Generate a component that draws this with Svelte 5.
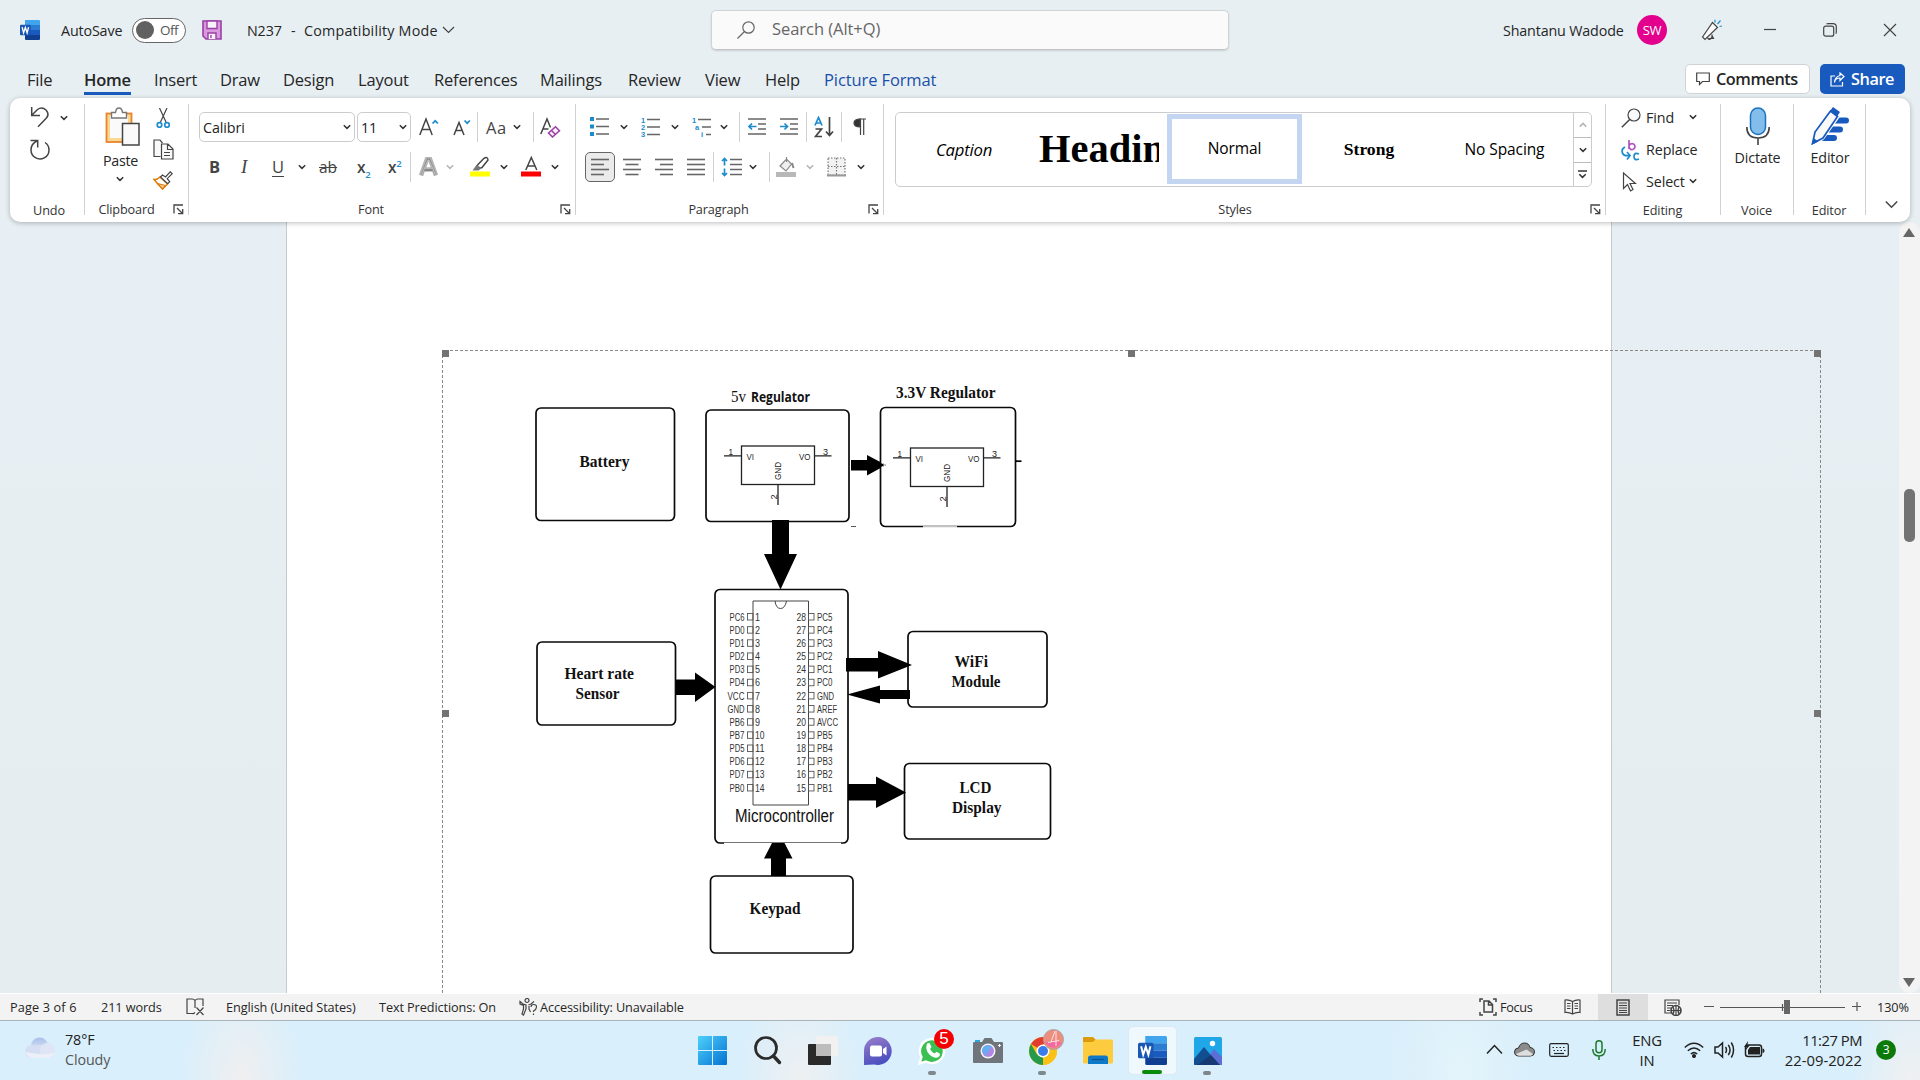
<script>
  const tabs = ['File', 'Home', 'Insert', 'Draw', 'Design', 'Layout', 'References', 'Mailings', 'Review', 'View', 'Help', 'Picture Format'];
  const leftPins = ['PC6', 'PD0', 'PD1', 'PD2', 'PD3', 'PD4', 'VCC', 'GND', 'PB6', 'PB7', 'PD5', 'PD6', 'PD7', 'PB0'];
  const rightPins = ['PC5', 'PC4', 'PC3', 'PC2', 'PC1', 'PC0', 'GND', 'AREF', 'AVCC', 'PB5', 'PB4', 'PB3', 'PB2', 'PB1'];
  const pinWidths = { AREF: 20, AVCC: 21, GND: 17, VCC: 17 };
  const boxes = [
    [536, 408, 138.5, 112.5],
    [706, 410, 143, 111.5],
    [880.5, 407.5, 135, 119],
    [537, 642, 138.5, 83],
    [715, 589.5, 133, 253.500],
    [908, 631.5, 139, 75.5],
    [904.5, 763.5, 146, 75.5],
    [710.5, 876, 142.5, 77]
  ];
  const titles = [
    ['Battery', 579.5, 466.5, 50],
    ['3.3V Regulator', 896, 397.5, 99.5],
    ['Heart rate', 564.5, 678.5, 69.5],
    ['Sensor', 575.5, 698.5, 44],
    ['WiFi', 954.5, 666.5, 33.5],
    ['Module', 951.5, 686.5, 49],
    ['LCD', 959.5, 792.5, 32],
    ['Display', 952, 812.5, 49.5],
    ['Keypad', 749.5, 914, 51]
  ];
</script>

{#snippet chev(faded = false)}
  <svg class="chev" class:faded width="8" height="6" viewBox="0 0 8 6"><path d="M.8 1.2 4 4.400 7.200 1.200" /></svg>
{/snippet}

{#snippet launcher()}
  <svg class="launcher" width="11" height="11" viewBox="0 0 11 11"><path d="M1 9.500V1h9M4 4l5.500 5.500M9.700 5v4.700H5" /></svg>
{/snippet}

{#snippet lines(widths, align)}
  <svg width="20" height="20" viewBox="0 0 20 20" class="ic">
    {#each widths as w, i}
      {@const x = align === 'c' ? (18 - w) / 2 : align === 'r' ? 18 - w : 0}
      <path class="bar" d="M{x} {2.5 + i * 5}h{w}" />
    {/each}
  </svg>
{/snippet}

{#snippet wordLogo(size)}
  <svg width={size} height={size} viewBox="0 0 28 28">
    <path fill="#41a5ee" d="M7 0h19.500q1.500 0 1.500 1.500V7H7z" />
    <path fill="#2b7cd3" d="M7 7h21v7H7z" />
    <path fill="#185abd" d="M7 14h21v7H7z" />
    <path fill="#103f91" d="M7 21h21v5.500q0 1.500-1.500 1.500H8.500Q7 28 7 26.500z" />
    <rect x="0" y="6.500" width="15" height="15" rx="1.500" fill="#1a56b4" />
    <path d="M3 10l2 8L7.500 10.500 10 18l2-8" fill="none" stroke="#fff" stroke-width="1.900" />
  </svg>
{/snippet}

{#snippet regulator(dx, dy)}
  <g transform="translate({dx} {dy})" class="reg">
    <rect x="741.500" y="446" width="73" height="38.500" />
    <path d="M724 455.800h17.500M814.500 455.800h17M778 484.500V505" />
    <text x="728.500" y="454.500" textLength="4.500" lengthAdjust="spacingAndGlyphs">1</text>
    <text x="823" y="454.500" textLength="5" lengthAdjust="spacingAndGlyphs">3</text>
    <text x="746.500" y="459.500" textLength="7.500" lengthAdjust="spacingAndGlyphs">VI</text>
    <text x="799" y="459.500" textLength="11.500" lengthAdjust="spacingAndGlyphs">VO</text>
    <text transform="translate(781 480) rotate(-90)" textLength="18" lengthAdjust="spacingAndGlyphs">GND</text>
    <text transform="translate(776.500 499.500) rotate(-90)" textLength="5">2</text>
  </g>
{/snippet}

<div class="window">
  <header class="titlebar">
    <div class="title-left">
      {@render wordLogo(20)}
      <span class="autosave">AutoSave</span>
      <span class="toggle"><i></i><b>Off</b></span>
      <svg class="save" width="20" height="20" viewBox="0 0 20 20">
        <path d="M1 1h18v18H4l-3-3z" fill="#d99add" stroke="#9b3fa5" stroke-width="1.600" />
        <path d="M5 1h10v7.500H5zM6 19v-6h8v6" fill="#f8f3fa" stroke="#9b3fa5" stroke-width="1.400" />
        <path d="M9 15v3" stroke="#9b3fa5" stroke-width="1.400" />
      </svg>
      <span class="doc">N237</span><span class="dash">-</span><span class="mode">Compatibility Mode</span>
      <svg width="13" height="8" viewBox="0 0 13 8" class="ic"><path d="M1 1l5.500 5.500L12 1" /></svg>
    </div>
    <div class="search">
      <svg width="20" height="20" viewBox="0 0 20 20" class="ic"><circle cx="12.500" cy="7.500" r="5.700" /><path d="M8.500 11.500 1.500 18.500" /></svg>
      <span>Search (Alt+Q)</span>
    </div>
    <div class="title-right">
      <span class="user">Shantanu Wadode</span>
      <span class="avatar">SW</span>
      <svg width="22" height="22" viewBox="0 0 22 22" class="ic">
        <path fill="#fafafa" d="M1.500 18 11.500 3.500l5 5L4 20.500z" /><path d="M6.500 18.500q1 2.500 3 1.500t1.500-4.500M11 16.500l1.500 3H8" /><path class="blue" d="M14 3.500V.8M16.500 5l3-3.500M18.500 7.500l2.500-.5" />
      </svg>
      <svg width="12" height="12" viewBox="0 0 12 12" class="ic"><path d="M0 5.500h12" /></svg>
      <svg width="14" height="14" viewBox="0 0 14 14" class="ic"><rect x=".7" y="3.200" width="10" height="10" rx="2" /><path d="M3.500 1Q4 .7 5 .7h5q3.300 0 3.300 3.300v5q0 1-.6 1.600" /></svg>
      <svg width="14" height="14" viewBox="0 0 14 14" class="ic"><path d="M1 1l12 12M13 1 1 13" /></svg>
    </div>
  </header>

  <nav class="tabrow">
    <div class="tabs">
      {#each tabs as t}
        <span class="tab" class:active={t === 'Home'} class:context={t === 'Picture Format'}>{t}</span>
      {/each}
    </div>
    <div class="actions">
      <span class="btn comments"><svg width="14" height="14" viewBox="0 0 14 14" class="ic"><path d="M.7 1h12.600v8.500H6.500L3.500 12.500V9.500H.7z" /></svg>Comments</span>
      <span class="btn share"><svg width="15" height="15" viewBox="0 0 15 15"><path d="M5 4H1v10h11.500V10M4.500 10.500Q5 6 10 6V8.500l4-4L10 1v2.500Q5 4.500 4.500 10.500z" fill="none" stroke="#fff" stroke-width="1.200" /></svg>Share</span>
    </div>
  </nav>

  <section class="ribbon">
    <div class="group g-undo">
      <div class="body">
        <svg width="20" height="21" viewBox="0 0 20 21" class="ic thick"><path d="M1.700 0v8.500H10M2 8 7.500 2.500Q12 -.6 16 3q4 4.500 0 8.500L8 19.800" /></svg>
        {@render chev()}
        <svg width="20" height="21" viewBox="0 0 20 21" class="ic thick"><path d="M.5 1.500h7.200v7M7.500 1.800Q1 4.500 1 11a9 9 0 1 0 14-7.500" /></svg>
      </div>
      <footer><span>Undo</span></footer>
    </div>

    <div class="group g-clip">
      <div class="body">
        <div class="paste">
          <svg width="36" height="39" viewBox="0 0 36 39">
            <rect x="1.500" y="6.500" width="25" height="28.500" fill="#fbd892" stroke="#e8842d" stroke-width="1.800" />
            <rect x="5" y="9" width="18" height="22" fill="#fafafa" />
            <path d="M6.500 11V5.500h4Q11 1 14 1t3.500 4.500h4V11z" fill="#fff" stroke="#777" stroke-width="1.400" />
            <rect x="17.500" y="16.500" width="16.500" height="21.500" fill="#fafafa" stroke="#444" stroke-width="1.500" />
          </svg>
          <span>Paste</span>
          {@render chev()}
        </div>
        <div class="clip-tools">
          <svg width="20" height="20" viewBox="0 0 20 20" class="ic"><path d="M6.500 0 13 14M14 0 7.500 14" /><circle class="blue fat" cx="6.500" cy="17" r="2.300" /><circle class="blue fat" cx="14" cy="17" r="2.300" /></svg>
          <svg width="21" height="21" viewBox="0 0 21 21" class="ic"><path fill="#fafafa" d="M7.500 17.500H1V1h6l2.500 3" /><path fill="#fafafa" d="M8.500 5H15l5 5v10H8.500zM14.500 5.500V10.500h5M11 13.500h6M11 16.500h6" /></svg>
          <svg width="20" height="20" viewBox="0 0 20 20" class="ic"><path d="M1 8.500 9.500 18l5-5L7 6Q4 9 1 8.500z" fill="#fff" stroke="#e07b10" stroke-width="1.500" /><path fill="#f7cf86" stroke="#e07b10" d="M4.500 12.500l8 2-3 3.500z" /><path fill="#fff" d="M7.500 6l2-2 3 2L17.300.8l1.900 1.900-5 5 2.500 3-2 2z" /></svg>
        </div>
      </div>
      <footer><span>Clipboard</span>{@render launcher()}</footer>
    </div>

    <div class="group g-font">
      <div class="row r1">
        <div class="combo">Calibri{@render chev()}</div>
        <div class="combo">11{@render chev()}</div>
        <svg width="22" height="22" viewBox="0 0 22 22" class="ic thick"><path d="M.8 19 7 3 13.200 19M3 13.500h8" /><path class="blue fat" d="M13.500 7.500l2.700-2.700 2.700 2.700" /></svg>
        <svg width="20" height="22" viewBox="0 0 20 22" class="ic thick"><path d="M1 19 6 6.500 11 19M3 14.500h6" /><path class="blue fat" d="M11.500 4.500l2.700 2.700 2.700-2.700" /></svg>
        <i class="sep"></i>
        <span class="aa">Aa</span>
        {@render chev()}
        <i class="sep"></i>
        <svg width="21" height="22" viewBox="0 0 21 22" class="ic thick"><path d="M.8 18 7 3l3.500 8.500M3 13h5.500" /><path stroke="#9b3fa5" fill="#f9effa" d="M8.500 17l7-6.200 4 4-7 6.200zM11.500 14.500l4 4" /></svg>
      </div>
      <div class="row r2">
        <b class="gl">B</b>
        <em class="gl it">I</em>
        <span class="gl un">U</span>
        {@render chev()}
        <s class="gl">ab</s>
        <b class="gl xx">x<sub>2</sub></b>
        <b class="gl xx">x<sup>2</sup></b>
        <i class="sep"></i>
        <svg width="20" height="20" viewBox="0 0 20 20"><path d="M2 18.500 8 2h3l6 16.500M5 12.500h9" fill="none" stroke="#b5b5b5" stroke-width="4.500" /><path d="M2.500 18 8.700 2.500h1.600L16.500 18M5.500 13h8" fill="none" stroke="#888" stroke-width="1.800" /><path d="M2.500 18 9 3h1l6.500 15" fill="none" stroke="#e0e0e0" stroke-width=".7" /></svg>
        {@render chev(true)}
        <svg width="21" height="22" viewBox="0 0 21 22" class="ic thick"><path d="M8 8.500 14 2.300Q17.500 0 18 4l-6 7.500-4.500 1.200L6.500 10.500z" /><path fill="#777" stroke="none" d="M6.500 9 2.500 14.500h6L12 12z" /><path stroke="#ff0" stroke-width="5" d="M0 18h20" /></svg>
        {@render chev()}
        <svg width="21" height="22" viewBox="0 0 21 22" class="ic thick"><path d="M4.800 14 10.300 1.500 15.800 14M6.800 10h7" /><path stroke="red" stroke-width="5" d="M0 18h20" /></svg>
        {@render chev()}
      </div>
      <footer><span>Font</span>{@render launcher()}</footer>
    </div>

    <div class="group g-para">
      <div class="row r1">
        <svg width="20" height="20" viewBox="0 0 20 20" class="ic"><path class="bar" d="M6 2h13M6 9.500h13M6 17h13" /><path fill="#1e8bcd" stroke="none" d="M0 0h4v4H0zM0 7.500h4v4H0zM0 15h4v4H0z" /></svg>
        {@render chev()}
        <svg width="20" height="20" viewBox="0 0 20 20" class="ic num"><path class="bar" d="M6 2.500h13M6 10h13M6 17.500h13" /><text x="0" y="5.500">1</text><text x="0" y="12.700">2</text><text x="0" y="20">3</text></svg>
        {@render chev()}
        <svg width="20" height="20" viewBox="0 0 20 20" class="ic num"><path class="bar" d="M6 2.500h13M10 10h9M14 17.500h5" /><text x="0" y="5.500">1</text><text x="3" y="12.700">a</text><text x="9" y="20">i</text></svg>
        {@render chev()}
        <i class="sep"></i>
        <svg width="19" height="20" viewBox="0 0 19 20" class="ic"><path class="bar" d="M0 2h18M10 7h8M10 12h8M0 17h18" /><path class="blue fat" d="M8.500 9.500H1.500M4 6.500l-3 3 3 3" /></svg>
        <svg width="19" height="20" viewBox="0 0 19 20" class="ic"><path class="bar" d="M0 2h18M10 7h8M10 12h8M0 17h18" /><path class="blue fat" d="M0 9.500h7M4.500 6.500l3 3-3 3" /></svg>
        <i class="sep"></i>
        <svg width="21" height="22" viewBox="0 0 21 22" class="ic"><path class="blue fat" d="M1 9.500 4.500 1.500 8 9.500M2.500 7h4" /><path class="fat" d="M1.500 13h6l-6 7.500h6.500M15.500 1v18M12 15.500l3.500 4 3.500-4" /></svg>
        <i class="sep"></i>
        <svg width="14" height="18" viewBox="0 0 14 18" class="ic"><path d="M6 1h7M7.500 1v16M10.700 1v16" /><path fill="#333" d="M7 9Q1 9 1 5t6-4z" /></svg>
      </div>
      <div class="row r2">
        <span class="sel">{@render lines([18, 13, 18, 13], 'l')}</span>
        {@render lines([18, 13, 18, 13], 'c')}
        {@render lines([18, 13, 18, 13], 'r')}
        {@render lines([18, 18, 18, 18], 'l')}
        <i class="sep"></i>
        <svg width="21" height="20" viewBox="0 0 21 20" class="ic"><path class="bar" d="M9 2.500h12M9 7.500h12M9 12.500h12M9 17.500h12" /><path class="blue fat" d="M3.500 1.500v7M1 4l2.500-2.500L6 4M3.500 11.500v7M1 16l2.500 2.500L6 16" /></svg>
        {@render chev()}
        <i class="sep"></i>
        <svg width="21" height="20" viewBox="0 0 21 20" class="ic"><path stroke="#888" fill="#eee" d="M4 9l6.500-7 5 5-5.500 7zM10.500 0v5" /><path stroke="#888" stroke-width="2" d="M16 6l1.500 5" /><path stroke="#b8b8b8" stroke-width="5" d="M0 17.500h20" /></svg>
        {@render chev(true)}
        <svg width="20" height="20" viewBox="0 0 20 20" class="ic"><path fill="#f2f2f2" stroke="#777" stroke-dasharray="1.500 1.500" d="M1 1h17v17H1zM9.500 1v17M1 9.500h17" /><path stroke="#999" stroke-width="2" d="M0 18.500h19" /></svg>
        {@render chev()}
      </div>
      <footer><span>Paragraph</span>{@render launcher()}</footer>
    </div>

    <div class="group g-styles">
      <div class="gallery">
        <span class="style caption">Caption</span>
        <span class="style heading"><span>Headin</span></span>
        <span class="style normal">Normal</span>
        <span class="style strong">Strong</span>
        <span class="style">No Spacing</span>
        <div class="scroller">
          <span><svg class="chev faded" width="8" height="6" viewBox="0 0 8 6"><path d="M.8 4.600 4 1.400 7.200 4.600" /></svg></span>
          <span>{@render chev()}</span>
          <span><svg class="chev" width="9" height="9" viewBox="0 0 9 9"><path d="M0 1h9M1.300 4.200 4.500 7.400 7.700 4.200" /></svg></span>
        </div>
      </div>
      <footer><span>Styles</span>{@render launcher()}</footer>
    </div>

    <div class="group g-edit">
      <div class="edit">
        <svg width="20" height="20" viewBox="0 0 20 20" class="ic"><circle cx="13" cy="7" r="6" fill="#fafafa" /><path d="M8.700 11.500.800 19.200" stroke-width="1.500" /></svg>
        <span>Find</span>{@render chev()}
        <svg width="20" height="21" viewBox="0 0 20 21" class="ic"><path stroke="#b353bd" stroke-width="1.700" d="M8 0v9M8 6.500a3 3 0 1 1 0 .1" /><path class="blue fat" d="M18 14q-5-2-5 2.500t5 2.500M4 7q-4 2-2.500 6 1 3.500 7 2.500M6 12l3 3.500-3 4" /></svg>
        <span>Replace</span><span></span>
        <svg width="16" height="20" viewBox="0 0 16 20" class="ic"><path fill="#fff" d="M2.500 1v15.500l4-4 3 6.500 2.500-1.500-3-6h5.500z" /></svg>
        <span>Select</span>{@render chev()}
      </div>
      <footer><span>Editing</span></footer>
    </div>

    <div class="group g-voice">
      <div class="big">
        <svg width="26" height="39" viewBox="0 0 26 39"><rect x="5.500" y="1" width="15" height="26.500" rx="7.500" fill="#83bdec" stroke="#1b73be" stroke-width="1.500" /><path d="M1.800 20q0 11 11.200 11t11.200-11M13 31v7" fill="none" stroke="#444" stroke-width="1.600" /></svg>
        <span>Dictate</span>
      </div>
      <footer><span>Voice</span></footer>
    </div>

    <div class="group g-editor">
      <div class="big">
        <svg width="40" height="39" viewBox="0 0 40 39"><g stroke="#185abd" stroke-width="6" stroke-linecap="round"><path d="M22 13.500h14M18 22.500h12M14 31h10" /></g><path d="M2 37.500 5 25 23 1.500l7 5.500L13 31z" fill="#fff" stroke="#fff" stroke-width="3" /><path d="M2.500 36.500 5 25 20.500 4l7 5.500L13 31z" fill="#fafafa" stroke="#185abd" stroke-width="1.700" /><path fill="#185abd" d="M20 4l3-4 7 5-3 4.500zM1.500 38 3.500 31l5 3.500z" /></svg>
        <span>Editor</span>
      </div>
      <footer><span>Editor</span></footer>
    </div>

    <div class="collapse"><svg width="13" height="9" viewBox="0 0 13 9" class="ic thick"><path d="M.8 1.500 6.500 7.200 12.200 1.500" /></svg></div>
  </section>

  <main class="canvas">
    <div class="page"></div>
    <svg class="drawing" width="1920" height="771" viewBox="0 222 1920 771">
      <path class="marquee" d="M442.500 993V350.500H1820.500V993" />
      <g fill="#737373">
        <rect x="442" y="350" width="7" height="7" /><rect x="1128" y="350" width="7" height="7" /><rect x="1814" y="350" width="7" height="7" />
        <rect x="442" y="710" width="7" height="7" /><rect x="1814" y="710" width="7" height="7" />
      </g>
      {#each boxes as [x, y, w, h]}
        <rect class="box" {x} {y} width={w} height={h} rx="5" />
      {/each}
      {#each titles as [t, x, y, w]}
        <text class="cap" {x} {y} textLength={w} lengthAdjust="spacingAndGlyphs">{t}</text>
      {/each}
      <text class="cap light" x="731" y="402" textLength="15" lengthAdjust="spacingAndGlyphs">5v</text>
      <text class="cap sans" x="751" y="401.500" textLength="59" lengthAdjust="spacingAndGlyphs">Regulator</text>
      {@render regulator(0, 0)}
      {@render regulator(169, 2)}
      <path stroke="#fff" stroke-width="1.500" d="M923 526.900h34M724 843.600h117" />
      <path stroke="#555" stroke-width="1" d="M851 526.500h5" />
      <path stroke="#000" stroke-width="1.700" d="M1016 461.200h5.500" />
      <g fill="#000">
        <path d="M851 460h16v-5L886 465l-19 10.500V470.500H851z" />
        <path d="M772 520h17v34h8l-16.500 35.500L764 554h8z" />
        <path d="M676 679.500h19v-7L715.500 687l-20.500 15v-7H676z" />
        <path d="M846 658h32v-7L912 665l-34 13.500V671.500H846z" />
        <path d="M910 690H880v-4.500L847 694.500 880 703.500V699h30z" />
        <path d="M848 784h28v-7.500L906 792.500 876 808V800.500H848z" />
        <path d="M771 876V858.500h-7l8-15.500h12.500l8 15.500H786V876z" />
      </g>
      <path d="M881 462.500l4 2.500-4 2.500" fill="none" stroke="#fff" stroke-width=".8" />
      <path d="M753 601h55.500v204H753zM775 601q1 7.500 5.500 7.500T786.500 601" fill="none" stroke="#444" stroke-width="1" />
      <g class="pins">
        {#each leftPins as p, i}
          {@const y = 617 + i * 13.15}
          {@const w = pinWidths[p] ?? 15}
          <text x={744.5 - w} y={y + 3.6} textLength={w} lengthAdjust="spacingAndGlyphs">{p}</text>
          <rect x="747.500" y={y - 3.5} width="5.500" height="6.500" />
          <text x="755" y={y + 3.6} textLength={i < 9 ? 5 : 9.5} lengthAdjust="spacingAndGlyphs">{i + 1}</text>
          <text x="796.500" y={y + 3.6} textLength="9.500" lengthAdjust="spacingAndGlyphs">{28 - i}</text>
          <rect x="808.500" y={y - 3.5} width="5.500" height="6.500" />
          <text x="817" y={y + 3.6} textLength={pinWidths[rightPins[i]] ?? 15.5} lengthAdjust="spacingAndGlyphs">{rightPins[i]}</text>
        {/each}
      </g>
      <text class="mcu" x="735" y="822" textLength="99" lengthAdjust="spacingAndGlyphs">Microcontroller</text>
    </svg>
    <div class="scrollbar">
      <svg width="12" height="9" viewBox="0 0 12 9"><path fill="#666" d="M6 0 12 9H0z" /></svg>
      <i></i>
      <svg width="12" height="9" viewBox="0 0 12 9"><path fill="#666" d="M0 0h12L6 9z" /></svg>
    </div>
  </main>

  <div class="status">
    <div class="st-left">
      <span>Page 3 of 6</span><span>211 words</span>
      <svg width="19" height="18" viewBox="0 0 19 18" class="ic"><path d="M9 14.500Q7.500 16 6 15.500H1V1h5q2 0 3 1.500Q10 1 12 1h5v7M9 2.500V10M10.500 9.500l7 7.500M17.500 9.500 10.500 17" /></svg>
      <span>English (United States)</span><span>Text Predictions: On</span>
      <svg width="19" height="18" viewBox="0 0 19 18" class="ic"><circle cx="8" cy="2.500" r="2" /><path d="M1 3.500 4 6 7 7v4L4.500 17 3 16l1.500-5L4.500 7.500 1 6zM9.500 7 12 6l3-2.500M10 8v3l1.500 3M12 9q0-2.500 2.800-2.500T17.500 9t-3 4v1M14.500 15.500v1.500" /></svg>
      <span class="acc">Accessibility: Unavailable</span>
    </div>
    <div class="st-right">
      <svg width="18" height="18" viewBox="0 0 18 18" class="ic"><path d="M4 1H1v3M14 1h3v3M4 17H1v-3M14 17h3v-3" stroke-width="1.500" /><path stroke-width="1.500" d="M5 3h5l3.500 3.500V14H5zM9.500 3v4H13" /></svg>
      <span class="focus">Focus</span>
      <svg width="17" height="16" viewBox="0 0 17 16" class="ic"><path d="M8.500 2.500Q5 .5 1 1v12.500q4-.5 7.500 1.500 3.500-2 7.500-1.500V1Q12 .5 8.500 2.500V15M3 4.500h3.500M3 7h3.500M3 9.500h3.500M10.500 4.500H14M10.500 7H14M10.500 9.500H14" /></svg>
      <span class="print"><svg width="14" height="17" viewBox="0 0 14 17" class="ic"><path stroke-width="1.500" d="M1 1h12v15H1z" /><path d="M3 4h8M3 6.500h8M3 9h8M3 11.500h8M3 13.500h8" /></svg></span>
      <svg width="18" height="17" viewBox="0 0 18 17" class="ic"><path d="M7 14H1V1h14v5M3 4h10M3 6.500h6M3 9h4M3 11.500h3" /><circle cx="12" cy="11.500" r="5" fill="#f3f3f3" stroke-width="1.600" /><path d="M7 11.500h10M12 6.500v10M9 8q2 3.500 0 7M15 8q-2 3.500 0 7" /></svg>
      <svg width="157" height="16" viewBox="0 0 157 16" class="ic slider"><path d="M0 7.500h10M16 8.500h125M78.500 5v7M148 7.500h10M153 3v9" /><rect x="80" y="1" width="6" height="14" fill="#666" stroke="none" /></svg>
      <span class="pct">130%</span>
    </div>
  </div>

  <div class="taskbar">
    <div class="weather">
      <svg width="31" height="22" viewBox="0 0 31 22">
        <defs><linearGradient id="cl" x2="0" y2="1"><stop offset="0" stop-color="#a9c0ea" /><stop offset="1" stop-color="#e9edf8" /></linearGradient></defs>
        <circle cx="14.500" cy="9" r="8.500" fill="url(#cl)" /><rect x="0" y="8" width="30" height="13" rx="6.500" fill="#d5def2" /><circle cx="22.500" cy="13.500" r="7.500" fill="#dfe5f5" /><path d="M0 15q3 6 8 6h15q6-1 7-6-5 3-15 2T0 15z" fill="#eceff8" />
      </svg>
      <div><span>78°F</span><span class="dim">Cloudy</span></div>
    </div>
    <div class="apps">
      <span class="app">
        <svg width="29" height="29" viewBox="0 0 29 29"><defs><linearGradient id="w" x2="1" y2="1"><stop offset="0" stop-color="#4fd0fb" /><stop offset="1" stop-color="#0372d1" /></linearGradient></defs><path fill="url(#w)" d="M1 0h13v14H0V1q0-1 1-1zM15 0h13q1 0 1 1v13H15zM0 15h14v14H1q-1 0-1-1zM15 15h14v13q0 1-1 1H15z" /></svg>
      </span>
      <span class="app">
        <svg width="29" height="29" viewBox="0 0 29 29" fill="none" stroke="#2b2b2b"><circle cx="13" cy="12" r="10.500" fill="#dfeef6" stroke-width="2.700" /><path stroke-width="3.400" stroke-linecap="round" d="M20.500 20l6 6.500" /></svg>
      </span>
      <span class="app">
        <svg width="30" height="29" viewBox="0 0 30 29"><rect y="8" width="23" height="21" rx="1" fill="#2a2a2a" /><rect x="8" width="22" height="20" rx="1" fill="#f1f1f1" /><path fill="#bcbcbc" d="M8 8h15v12H8z" /></svg>
      </span>
      <span class="app">
        <svg width="30" height="30" viewBox="0 0 30 30"><defs><linearGradient id="t" x2=".4" y2="1"><stop offset="0" stop-color="#9d7fc9" /><stop offset="1" stop-color="#4c50c0" /></linearGradient></defs><path fill="url(#t)" d="M15 1a14 14 0 1 1-4 27.500L1 29V15A14 14 0 0 1 15 1z" /><rect x="7" y="9.500" width="12" height="11" rx="2" fill="#fff" /><path fill="#fff" d="M20 13l3.500-2.500v9L20 17z" /></svg>
      </span>
      <span class="app">
        <svg width="29" height="29" viewBox="0 0 29 29"><path d="M1.500 27.500 3.500 21A12 12 0 1 1 8 25.500z" fill="#3cc053" stroke="#fff" stroke-width="2.400" /><path fill="#fff" d="M9 7.500l2.500-.5 2 4-1.500 2q1.500 3 4.500 4.500l2-1.800 3.500 2q0 3.500-3.500 4Q15 22 11 18T9 7.500z" /></svg>
        <b class="badge">5</b><i class="run"></i>
      </span>
      <span class="app">
        <svg width="30" height="25" viewBox="0 0 30 25"><path fill="#2ca5dc" d="M2 2h5v4H2z" /><path fill="#70757b" d="M1 4h8l2.500-4h7L21 4h8q1 0 1 1v19q0 1-1 1H1q-1 0-1-1V5q0-1 1-1z" /><circle cx="15" cy="13" r="7.500" fill="#f4f4f8" /><circle cx="15" cy="13" r="6" fill="#b186e6" /><path fill="#67aef0" d="M9 13a6 6 0 0 1 10-4.500L12 18z" /><path stroke="#fff" stroke-width=".9" d="M26.500 6v3M25 7.500h3" /></svg>
      </span>
      <span class="app">
        <svg width="28" height="28" viewBox="0 0 28 28"><circle cx="14" cy="14" r="14" fill="#fbc116" /><path fill="#e33b2e" d="M14 14 1.900 7A14 14 0 0 1 26.100 7H14z" /><path fill="#269a4b" d="M1.900 7 8 17.500 14 20.500 14 28A14 14 0 0 1 1.900 7z" /><path fill="#fbc116" d="M20 17.500 14 28A14 14 0 0 0 26.100 7H14z" /><circle cx="14" cy="14" r="6.500" fill="#fff" /><circle cx="14" cy="14" r="5" fill="#3a7cec" /></svg>
        <svg class="profile" width="21" height="21" viewBox="0 0 21 21"><circle cx="10.500" cy="10.500" r="10" fill="#ed8d7e" stroke="#a9a49f" /><path fill="#f26aa0" d="M2 14q8-5 17 0-8 9-17 0z" /><path stroke="#fde2e4" stroke-width="1" fill="none" d="M12 2 8 13M13 2v15M5 13.500l11-2" /></svg>
        <i class="run"></i>
      </span>
      <span class="app">
        <svg width="30" height="27" viewBox="0 0 30 27"><path fill="#dc9b0b" d="M1 0h9l3 3v6H0V1q0-1 1-1z" /><path fill="#fdcb3e" d="M0 5h10l2.500-2.500H29q1 0 1 1V25q0 1.500-1 1.500H1Q0 26.500 0 25z" /><path fill="#0f79c9" d="M5 27v-6q0-2.500 2.500-2.500h15q2.500 0 2.500 2.500v6z" /><path stroke="#07528f" stroke-width="1.200" d="M9 22.500h12" /></svg>
      </span>
      <span class="app on">{@render wordLogo(29)}<i class="run active-run"></i></span>
      <span class="app">
        <svg width="28" height="28" viewBox="0 0 28 28"><rect width="28" height="28" rx="1.500" fill="#20a7e8" /><path fill="#5d6fd5" d="M10 25 20 12l8 8v8H10z" /><path fill="#124f91" d="M0 22 10 10l15 18H1q-1 0-1-1z" /><path fill="#173a74" d="M3 28 17 18l9 10z" /><circle cx="18.500" cy="6.500" r="2.700" fill="#fff" /></svg>
        <i class="run"></i>
      </span>
    </div>
    <div class="tray">
      <svg width="17" height="11" viewBox="0 0 17 11" class="ic thick"><path d="M1 9.500 8.500 1.500 16 9.500" /></svg>
      <svg width="21" height="15" viewBox="0 0 21 15"><path d="M5 14q-4.500 0-4.500-4T4.500 6q1.500-5 6-5T16 5.500q4.500.5 4.500 4.500t-4 4z" fill="#8b8b8b" stroke="#333" /><path d="M2 12 12.500 7.500 19 12q-1 2-3 1.700H5Q3 13.700 2 12z" fill="#dedede" /></svg>
      <svg width="20" height="14" viewBox="0 0 20 14" class="ic"><rect x=".7" y=".7" width="18.600" height="12.600" rx="1.500" /><path stroke-dasharray="1.500 2" d="M3.500 4.500h13M4.500 7.500h12" /><path d="M5 10.500h10" /></svg>
      <svg width="14" height="20" viewBox="0 0 14 20" fill="none" stroke="#1d7a2d" stroke-width="1.500"><rect x="4" y=".8" width="6" height="12" rx="3" /><path d="M.8 9q0 7 6.200 7t6.200-7M7 16v4" /></svg>
      <div class="lang"><span>ENG</span><span>IN</span></div>
      <svg width="20" height="16" viewBox="0 0 20 16" class="ic thick"><path d="M.8 5.500q9.200-8.500 18.400 0M3.800 8.800q6.200-5.500 12.400 0M6.800 12q3.200-2.700 6.400 0" /><circle cx="10" cy="14" r="1.300" fill="#222" /></svg>
      <svg width="21" height="18" viewBox="0 0 21 18" class="ic thick"><path d="M1 6h3l4.500-4v14L4 12H1zM11.500 6q2 3 0 6M14.300 3.800q3.500 5.200 0 10.400M17.300 1.500q4.500 7.500 0 15" /></svg>
      <svg width="21" height="17" viewBox="0 0 21 17" class="ic thick"><rect x="1.500" y="4" width="16" height="11.500" rx="2.500" /><path fill="#222" stroke="none" d="M6 6h10v7.500H4V9zM18.500 7.500q2 0 2 2.200t-2 2.200zM4 0 0 6h2.500L1 10 6 4H3.500z" /></svg>
      <div class="clock"><span class="time">11:27 PM</span><span>22-09-2022</span></div>
      <b class="count">3</b>
    </div>
  </div>
</div>

<style>
  :global(body) { margin: 0; overflow: hidden; }
  .window { width: 1920px; height: 1080px; display: flex; flex-direction: column; background: #e7eff3; color: #262626; font: 14.3px 'Open Sans', 'Noto Sans', sans-serif; white-space: nowrap; }
  .window :global(svg) { display: block; flex: none; }
  .ic { fill: none; stroke: #444; stroke-width: 1.2; }
  .thick { stroke-width: 1.5; }
  .fat { stroke-width: 1.7; }
  .blue { stroke: #1e8bcd; }
  .bar { stroke: #666; stroke-width: 1.6; }
  .chev { fill: none; stroke: #333; stroke-width: 1.5; }
  .faded { stroke: #b5b5b5; }
  .launcher { fill: none; stroke: #444; stroke-width: 1.3; }

  .titlebar { height: 60px; display: grid; grid-template-columns: 711px 518px 1fr; }
  .title-left { display: grid; grid-template-columns: 41px 71px 70px 45px 44px 13px 138px 14px; align-items: center; padding-left: 20px; }
  .autosave, .doc, .user { letter-spacing: -0.15px; }
  .mode { letter-spacing: 0.2px; }
  .toggle { box-sizing: border-box; width: 54px; height: 25px; border: 1px solid #666; border-radius: 13px; background: #fff; display: flex; align-items: center; gap: 6px; padding-left: 3px; }
  .toggle i { width: 18px; height: 18px; border-radius: 50%; background: #616161; }
  .toggle b { font-weight: 400; font-size: 13.5px; letter-spacing: -0.5px; color: #555; }
  .search { box-sizing: border-box; height: 40px; margin-top: 10px; background: #fafafa; border: 1px solid #d1d4d6; border-bottom-color: #c2c4c6; border-radius: 5px; box-shadow: 0 1px 2px #0002; display: flex; align-items: center; gap: 16px; padding-left: 24px; font-size: 16.5px; letter-spacing: -0.05px; color: #666; }
  .search .ic { stroke: #666; }
  .search span { line-height: 34px; padding-bottom: 2px; }
  .title-right { display: grid; grid-template-columns: 134px 64px 63px 59px 60px 14px; align-items: center; padding-left: 274px; }
  .avatar { width: 30px; height: 30px; border-radius: 50%; background: #e3008c; color: #fff; font-size: 13px; letter-spacing: -0.3px; line-height: 30px; text-align: center; }

  .tabrow { height: 38px; display: flex; justify-content: space-between; }
  .tabs { display: grid; grid-template-columns: 57px 70px 66px 63px 75px 76px 106px 88px 77px 60px 59px 114px; padding-left: 27px; font-size: 16.5px; letter-spacing: -0.2px; }
  .tab { justify-self: start; line-height: 40px; height: 38px; }
  .active { font-weight: 600; letter-spacing: -0.25px; background: linear-gradient(#185abd, #185abd) 0 32px / 100% 3px no-repeat; }
  .context { color: #1a4fa8; letter-spacing: -0.1px; }
  .actions { display: flex; gap: 10px; padding: 4px 15px 4px 0; }
  .btn { box-sizing: border-box; height: 30px; display: flex; align-items: center; gap: 6px; border-radius: 5px; font-weight: 600; font-size: 16.3px; letter-spacing: -0.45px; padding-left: 10px; }
  .comments { width: 125px; background: #fff; border: 1px solid #d0d3d5; }
  .share { width: 85px; background: #185abd; color: #fff; }

  .ribbon { position: relative; z-index: 1; box-sizing: border-box; height: 124px; margin: 0 10px; padding-top: 6px; background: #fff; border-radius: 10px; box-shadow: 0 1px 5px #0004; display: flex; flex: none; }
  .group { height: 111px; box-shadow: 1px 0 0 #d0d0d0; display: flex; flex-direction: column; }
  .group footer { height: 12px; line-height: 12px; margin-top: auto; font-size: 12.7px; letter-spacing: -0.15px; display: grid; grid-template-columns: 1fr auto; align-items: center; padding-right: 4px; color: #333; }
  .group footer span { justify-self: center; }
  .g-undo { width: 74px; }
  .g-undo .body { display: grid; grid-template-columns: 30px 10px; row-gap: 11px; padding: 3px 0 0 20px; align-items: center; }
  .g-undo footer, .g-edit footer, .g-voice footer, .g-editor footer { padding: 1px 0 0; height: 11px; }
  .g-undo footer { padding-left: 4px; }
  .g-clip { width: 104px; }
  .g-clip .body { display: flex; padding: 3px 0 0 18px; }
  .g-clip footer { padding-right: 4px; }
  .g-clip footer span { margin-right: 4px; }
  .g-font footer span, .g-para footer span { margin-right: 6px; }
  .g-styles footer span { margin-right: 3px; }
  .paste { width: 48px; display: flex; flex-direction: column; padding-left: 3px; }
  .paste span { margin-left: -2px; line-height: 22px; margin-top: 4px; letter-spacing: -0.3px; }
  .paste .chev { margin: 4px 0 0 11px; }
  .clip-tools { display: flex; flex-direction: column; gap: 11px; padding-top: 1px; }
  .g-font { width: 387px; }
  .row { display: grid; align-items: center; height: 29px; }
  .r1 { margin-top: 8px; }
  .r2 { margin-top: 11px; }
  .sep { width: 1px; height: 30px; background: #d0d0d0; }
  .g-font .r1 { grid-template-columns: 158px 62px 34px 24px 9px 27px 20px 7px 21px; padding-left: 11px; }
  .g-font .r2 { grid-template-columns: 32px 31px 26px 21px 38px 31px 22px 9px 27px 24px 30px 21px 30px 8px; padding-left: 21px; }
  .combo { box-sizing: border-box; height: 30px; width: 156px; border: 1px solid #ccc; border-radius: 5px; display: flex; align-items: center; justify-content: space-between; padding: 0 3px; letter-spacing: -0.1px; color: #222; }
  .combo + .combo { width: 54px; }
  .aa { font-size: 16.5px; letter-spacing: 0.6px; color: #444; }
  .gl { font-size: 16.5px; color: #444; line-height: 20px; justify-self: start; }
  .it { font-family: 'Liberation Serif', serif; font-size: 19px; }
  .un { text-decoration: underline; text-underline-offset: 3px; }
  s.gl { font-size: 15.5px; letter-spacing: 0; }
  .xx { font-size: 15.5px; font-weight: 600; letter-spacing: -0.4px; }
  .gl sub, .gl sup { font-size: 9.5px; line-height: 0; color: #1e8bcd; }
  .gl sub { vertical-align: -5px; }
  .g-para { width: 308px; }
  .g-para .r1 { grid-template-columns: 30px 21px 30px 21px 28px 19px 9px 32px 26px 8px 27px 12px 14px; padding-left: 15px; }
  .g-para .r2 { grid-template-columns: 38px 32px 32px 26px 8px 28px 20px 7px 30px 21px 30px 8px; padding-left: 10px; }
  .num { overflow: visible; }
  .num text { font: bold 7.5px 'Liberation Sans', sans-serif; fill: #1e8bcd; stroke: none; }
  .sel { box-sizing: border-box; width: 30px; height: 30px; border: 1px solid #666; border-radius: 5px; background: #ebebeb; display: grid; place-items: center; padding-left: 1px; }
  .g-styles { width: 722px; }
  .gallery { box-sizing: border-box; width: 697px; height: 75px; margin: 8px 0 0 12px; border: 1px solid #ccc; border-radius: 5px; display: grid; grid-template-columns: 136px 135px 135px 134px 137px 1fr; align-items: center; color: #000; letter-spacing: -0.1px; font-size: 15.5px; }
  .style { text-align: center; margin-top: -1px; }
  .caption { font-style: italic; font-size: 16.7px; letter-spacing: -0.2px; }
  .heading span { display: block; width: 120px; margin-left: 7px; overflow: hidden; text-align: left; letter-spacing: 0; font: bold 40.5px/60px 'Liberation Serif', serif; }
  .normal { box-sizing: border-box; width: 135px; height: 70px; border: 5px solid #c4d5f2; line-height: 58px; }
  .strong { font: bold 17.6px 'Liberation Serif', serif; letter-spacing: 0; }
  .scroller { height: 73px; display: grid; grid-template-rows: 1fr 1fr 1fr; border-left: 1px solid #ccc; }
  .scroller span { display: grid; place-items: center; }
  .scroller span + span { border-top: 1px solid #bbb; }
  .g-edit { width: 115px; }
  .edit { display: grid; grid-template-columns: 25px 43px 10px; grid-template-rows: 32px 32px 32px; align-items: center; padding: 0 0 0 16px; margin-top: -3px; letter-spacing: -0.1px; }
  .edit .ic { margin-top: 2px; }
  .g-voice { width: 73px; }
  .g-editor { width: 72px; }
  .big { display: flex; flex-direction: column; align-items: center; padding: 3px 0 0 2px; letter-spacing: -0.15px; }
  .big span { line-height: 22px; margin-top: 1px; }
  .collapse { padding: 96px 0 0 20px; }

  .canvas { position: relative; height: 771px; flex: none; overflow: hidden; background: linear-gradient(#e7eff4, #e5edf0); display: flex; justify-content: space-between; }
  .page { box-sizing: border-box; margin-left: 286px; width: 1326px; border: solid #c6cacc; border-width: 0 1px; background: #fff; }
  .drawing { position: absolute; inset: 0; }
  .marquee { fill: none; stroke: #888; stroke-width: 1; stroke-dasharray: 3 2; }
  .box { fill: none; stroke: #0a0a0a; stroke-width: 1.7; }
  .cap { font: bold 16.5px 'Liberation Serif', serif; fill: #111; }
  .light { font-weight: 400; font-size: 17px; }
  .sans { font: bold 15px 'Open Sans', sans-serif; }
  .reg { fill: none; stroke: #222; stroke-width: 1.3; }
  .reg text { font: 9.3px 'Liberation Sans', sans-serif; fill: #222; stroke: none; }
  .pins text { font: 10px 'Liberation Sans', sans-serif; fill: #333; }
  .pins rect { fill: none; stroke: #555; stroke-width: 0.9; }
  .mcu { font: 17.5px 'Liberation Sans', sans-serif; fill: #111; }
  .scrollbar { width: 21px; box-sizing: border-box; background: #f3f3f3; border-radius: 10px; display: flex; flex-direction: column; align-items: center; padding: 6px 1px 6px 0; }
  .scrollbar i { width: 11px; height: 53px; border-radius: 5px; background: #737373; margin: 252px 0 auto; }

  .status { box-sizing: border-box; height: 28px; background: #f3f3f3; border-bottom: 1px solid #a9b4ba; border-top: 1px solid #fff; display: flex; justify-content: space-between; font-size: 12.7px; letter-spacing: -0.1px; }
  .st-left { display: grid; grid-template-columns: 91px 85px 40px 153px 140px 21px 150px; align-items: center; padding-left: 10px; }
  .st-left span:first-child { letter-spacing: 0.15px; }
  .st-right { display: grid; grid-template-columns: 21px 64px 34px 66px 40px 173px 43px; align-items: center; }
  .focus { letter-spacing: -0.3px; }
  .acc { letter-spacing: -0.1px; }
  .print { width: 50px; height: 26px; background: #dedede; display: grid; place-items: center; }
  .slider { stroke: #555; }

  .taskbar { height: 59px; display: grid; grid-template-columns: 685px 550px 1fr; align-items: center; background: radial-gradient(ellipse 60px 110px at 242px 60px, #f0eff0, #f0eff000), radial-gradient(ellipse 60px 110px at 800px 60px, #eef0f2, #eef0f200), radial-gradient(ellipse 70px 110px at 1460px 50px, #e4f4fa, #e4f4fa00), radial-gradient(ellipse 60px 110px at 1910px 60px, #eff0f1, #eff0f100), #d9effb; }
  .weather { display: flex; gap: 9px; padding: 0 0 2px 25px; align-items: center; }
  .weather > svg { margin-top: -4px; }
  .weather div { display: flex; flex-direction: column; line-height: 20px; letter-spacing: -0.1px; color: #222; }
  .weather .dim { color: #555; }
  .apps { display: grid; grid-template-columns: repeat(10, 55px); }
  .app { position: relative; box-sizing: border-box; width: 49px; height: 49px; margin: 0 3px; display: grid; place-items: center; }
  .on { background: #eef8fd; border: 1px solid #dce9f0; border-radius: 5px; }
  .run { position: absolute; bottom: 0; left: 20px; width: 8px; height: 4px; border-radius: 2px; background: #7d878c; }
  .active-run { width: 20px; left: 13px; background: #0b8b0b; }
  .badge { position: absolute; left: 26px; top: 3px; width: 20px; height: 20px; border-radius: 50%; background: #f40000; color: #fff; text-align: center; font: 17px/20px 'Liberation Sans', sans-serif; }
  .profile { position: absolute; left: 25px; top: 3px; }
  .tray { display: grid; grid-template-columns: 28px 35px 43px 36px 56px 30px 30px 36px 82px 34px; align-items: center; padding: 0 0 2px 251px; color: #222; font-size: 14.8px; letter-spacing: -0.2px; }
  .tray .ic { stroke: #222; }
  .lang, .clock { display: flex; flex-direction: column; line-height: 20px; }
  .lang { width: 38px; align-items: center; }
  .clock { align-items: flex-end; letter-spacing: 0; }
  .time { letter-spacing: -0.5px; }
  .count { justify-self: end; width: 20px; height: 20px; border-radius: 50%; background: #0b7a0b; color: #fff; font: 12px/20px 'Open Sans', sans-serif; text-align: center; }
</style>
